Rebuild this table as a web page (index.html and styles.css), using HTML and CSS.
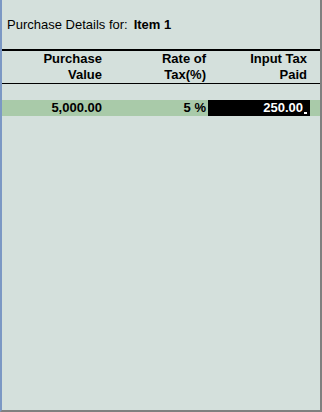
FILE: index.html
```html
<!DOCTYPE html>
<html>
<head>
	<meta charset="utf-8">
	<title>Purchase Details</title>
	<link rel="stylesheet" href="styles.css">
</head>
<body>
	<div class="window">
		<div class="title">Purchase Details for:<span class="item">Item 1</span></div>
		<div class="grid head">
			<div class="cell">Purchase<br>Value</div>
			<div class="cell">Rate of<br>Tax(%)</div>
			<div class="cell last">Input Tax<br>Paid</div>
			<div></div>
		</div>
		<div class="grid row">
			<div class="cell">5,000.00</div>
			<div class="cell">5 %</div>
			<div class="cell last active">250.00<span class="caret"></span></div>
			<div></div>
		</div>
	</div>
</body>
</html>
```

FILE: styles.css
```css
body {
	margin: 0;
	font-family: "Liberation Sans", Arial, sans-serif;
	font-size: 13px;
	color: #000;
}
.window {
	width: 322px;
	height: 412px;
	box-sizing: border-box;
	background-color: #d4e0dc;
	border-left: 2px solid #7b98c4;
	border-right: 2px solid #808080;
	border-bottom: 2px solid #808080;
}
.title {
	padding: 17px 0 0 5px;
	line-height: 16px;
}
.item {
	font-weight: bold;
	margin-left: 6px;
}
.grid {
	display: grid;
	grid-template-columns: 102px 104px 102px 1fr;
	font-weight: bold;
	line-height: 16px;
}
.head {
	margin-top: 16px;
	border-top: 2px solid #000;
	border-bottom: 1px solid #000;
	height: 32px;
}
.cell {
	text-align: right;
	padding-right: 2px;
}
.cell.last {
	padding-right: 3px;
}
.row {
	margin-top: 16px;
	background-color: #a9caa9;
	height: 16px;
}
.active {
	background-color: #000;
	color: #fff;
	padding-right: 0;
}
.caret {
	display: inline-block;
	width: 3px;
	height: 2px;
	margin-left: 1px;
	background-color: #fff;
	vertical-align: -2px;
}
```
